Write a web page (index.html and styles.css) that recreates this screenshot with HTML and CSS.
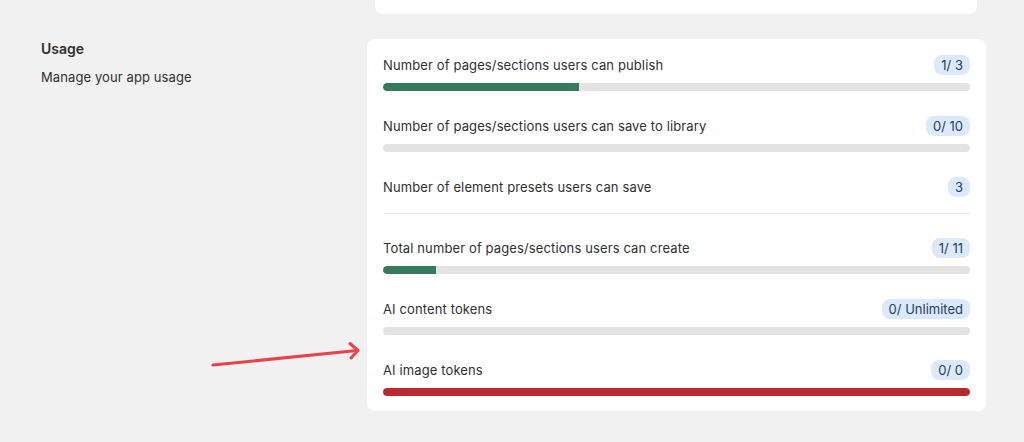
FILE: index.html
```html
<!DOCTYPE html>
<html lang="en">
<head>
<meta charset="utf-8">
<title>Usage</title>
<link rel="stylesheet" href="styles.css">
</head>
<body>
<div class="page">
  <div class="prev-row"><div class="prev-card"></div></div>
  <section class="usage">
    <div class="usage-info">
      <h2 class="usage-title">Usage</h2>
      <p class="usage-desc">Manage your app usage</p>
    </div>
    <div class="card">
      <div class="group">
        <div class="row">
          <div class="row-head"><span class="label">Number of pages/sections users can publish</span><span class="badge">1/ 3</span></div>
          <div class="bar"><div class="fill fill-green" style="width:33.33%"></div></div>
        </div>
        <div class="row">
          <div class="row-head"><span class="label">Number of pages/sections users can save to library</span><span class="badge">0/ 10</span></div>
          <div class="bar"></div>
        </div>
        <div class="row">
          <div class="row-head"><span class="label">Number of element presets users can save</span><span class="badge">3</span></div>
        </div>
      </div>
      <div class="divider"></div>
      <div class="group">
        <div class="row">
          <div class="row-head"><span class="label">Total number of pages/sections users can create</span><span class="badge">1/ 11</span></div>
          <div class="bar"><div class="fill fill-green" style="width:9.09%"></div></div>
        </div>
        <div class="row">
          <div class="row-head"><span class="label">AI content tokens</span><span class="badge">0/ Unlimited</span></div>
          <div class="bar"></div>
        </div>
        <div class="row">
          <div class="row-head"><span class="label">AI image tokens</span><span class="badge">0/ 0</span></div>
          <div class="bar"><div class="fill fill-red" style="width:100%"></div></div>
        </div>
      </div>
    </div>
  </section>
  <svg class="arrow" width="1024" height="442" viewBox="0 0 1024 442" aria-hidden="true">
    <line x1="213" y1="365" x2="357" y2="350.5" stroke="#e8424a" stroke-width="3" stroke-linecap="round"/>
    <polyline points="350,343.5 358,350.5 351,358" fill="none" stroke="#e8424a" stroke-width="3" stroke-linecap="round" stroke-linejoin="round"/>
  </svg>
</div>
</body>
</html>
```
FILE: styles.css
```css
* { box-sizing: border-box; }
html, body { margin: 0; padding: 0; }
body {
  background: #f1f1f1;
  font-family: Inter, "Noto Sans", "Liberation Sans", sans-serif;
  color: #303030;
  width: 1024px;
  height: 442px;
  overflow: hidden;
}
.page { position: relative; width: 1024px; height: 442px; }
.prev-row { display: flex; padding-left: 375px; }
.prev-card {
  width: 602px;
  height: 14px;
  background: #ffffff;
  border-radius: 0 0 8px 8px;
}
.usage {
  display: flex;
  margin-top: 25px;
  padding-left: 41px;
}
.usage-info { width: 326px; }
.usage-title {
  margin: 0;
  font-size: 14px;
  line-height: 20px;
  font-weight: 600;
  color: #303030;
}
.usage-desc {
  margin: 8px 0 0;
  font-size: 13px;
  line-height: 20px;
  letter-spacing: 0.1px;
  color: #303030;
}
.card {
  width: 619px;
  background: #ffffff;
  border-radius: 8px;
  padding: 16px 16px 15px;
  display: flex;
  flex-direction: column;
}
.group { display: flex; flex-direction: column; gap: 25px; }
.divider {
  height: 1px;
  background: #ebebeb;
  margin: 16px 0 24px;
}
.row { display: flex; flex-direction: column; gap: 8px; }
.row-head {
  display: flex;
  align-items: center;
  justify-content: space-between;
  height: 20px;
}
.label { font-size: 13px; line-height: 20px; letter-spacing: 0.12px; color: #303030; }
.badge {
  height: 20px;
  line-height: 20px;
  padding: 0 7px;
  border-radius: 8px;
  background: #dbe9fb;
  color: #24405f;
  font-size: 13px;
}
.bar {
  height: 8px;
  border-radius: 4px;
  background: #e3e3e3;
  overflow: hidden;
}
.fill { height: 100%; border-radius: 4px 0 0 4px; }
.fill-green { background: #367a5c; }
.fill-red { background: #b9292f; border-radius: 4px; }
.arrow { position: absolute; left: 0; top: 0; pointer-events: none; }
```
